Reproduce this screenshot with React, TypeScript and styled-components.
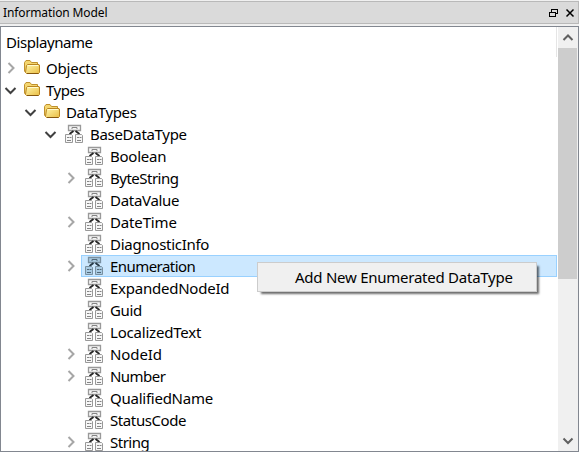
import React from 'react';
import styled, { createGlobalStyle } from 'styled-components';

const GlobalStyle = createGlobalStyle`
  * { box-sizing: border-box; }
  body { margin: 0; background: #f0f0f0; overflow: hidden; font-family: 'Noto Sans', 'Open Sans', sans-serif; }
`;

const Dock = styled.div`
  width: 579px;
  height: 452px;
  padding-top: 1px;
  display: flex;
  flex-direction: column;
  gap: 2px;
  background: #f0f0f0;
  color: #000;
`;

const TitleBar = styled.header`
  display: flex;
  align-items: center;
  height: 23px;
  width: 579px;
  padding: 0 3px 0 3px;
  border: 1px solid #b9b9b9;
  border-left-width: 0;
  background: #dadada;
`;

const Title = styled.span`
  flex: 1;
  font-size: 12px;
  line-height: 21px;
  letter-spacing: -0.12px;
`;

const TitleButtons = styled.div`
  display: flex;
  gap: 6px;
`;

const TreeFrame = styled.main`
  display: flex;
  width: 579px;
  height: 426px;
  border: 1px solid #828790;
  background: #fff;
`;

const Tree = styled.section`
  flex: 1;
  overflow: hidden;
`;

const HeaderRow = styled.div`
  display: flex;
  align-items: flex-start;
  height: 30px;
`;

const HeaderText = styled.span`
  flex: 1;
  padding: 4px 0 0 5px;
  font-size: 15px;
  line-height: 22px;
  letter-spacing: -0.43px;
`;

const HeaderDivider = styled.i`
  width: 1px;
  height: 30px;
  background: #e5e5e5;
  margin-right: 1px;
`;

const Row = styled.div<{ $depth: number }>`
  display: flex;
  height: 22px;
  padding-left: ${(p) => p.$depth * 20}px;
`;

const Branch = styled.div`
  width: 20px;
  flex: none;
  display: flex;
  align-items: center;
`;

const Item = styled.div<{ $selected?: boolean; $folder?: boolean }>`
  display: flex;
  align-items: center;
  flex: 1;
  height: 22px;
  margin-right: 1px;
  padding-left: ${(p) => (p.$folder ? 1 : 3)}px;
  border: 1px solid ${(p) => (p.$selected ? '#99d1ff' : 'transparent')};
  background: ${(p) => (p.$selected ? '#cce8ff' : 'transparent')};
`;

const Label = styled.span<{ $spacing: number; $folder?: boolean }>`
  margin-left: ${(p) => (p.$folder ? 5 : 7)}px;
  font-size: 15px;
  line-height: 22px;
  white-space: nowrap;
  letter-spacing: ${(p) => p.$spacing}px;
`;

const ScrollBar = styled.aside`
  display: flex;
  flex-direction: column;
  width: 20px;
  padding-right: 1px;
  background: #f0f0f0;
`;

const ScrollButton = styled.div`
  display: flex;
  align-items: center;
  justify-content: center;
  height: 21px;
`;

const ScrollTrack = styled.div`
  flex: 1;
`;

const ScrollThumb = styled.div`
  height: 231px;
  background: #cdcdcd;
`;

const ContextMenu = styled.div`
  position: absolute;
  left: 257px;
  top: 262px;
  width: 280px;
  height: 30px;
  padding-left: 37px;
  border: 1px solid #ccc;
  background: #f0f0f0;
  box-shadow: 3px 3px 2px -1px rgba(0, 0, 0, 0.58);
  font-size: 15px;
  line-height: 29px;
  letter-spacing: -0.25px;
  white-space: nowrap;
`;

const Svg = styled.svg`
  display: block;
  flex: none;
`;

const Chevron = ({ open }: { open: boolean }) => (
  <Svg width="20" height="20" fill="none" strokeWidth="2" stroke={open ? '#404040' : '#a6a6a6'}>
    <path d={open ? 'M4.5 8L9.5 13L14.5 8' : 'M7.5 5L12.5 10L7.5 15'} />
  </Svg>
);

const Folder = () => (
  <Svg width="18" height="18">
    <defs>
      <linearGradient id="folderFace" x1="0" y1="0" x2="1" y2="1">
        <stop offset="0" stopColor="#fff6ac" />
        <stop offset="1" stopColor="#e9bd43" />
      </linearGradient>
    </defs>
    <path d="M2.5 13.5L1.5 12V3.5L3 1.5H7L8.5 3.5H14.5V13" fill="#f4d66f" stroke="#c0912d" />
    <path d="M4.5 5.5H16L16.5 6V13.5L15.5 14.5H3.5L2.5 13.5L3.5 6.5Z" fill="url(#folderFace)" stroke="#b98420" />
    <path d="M5 6.5H15" stroke="#fffbd0" />
    <path d="M4 14.5H15.5" stroke="#85560e" />
  </Svg>
);

const DataTypeIcon = ({ selected }: { selected: boolean }) => {
  const frame = selected ? '#7990a1' : '#999';
  const fill = selected ? '#a9cbe3' : '#f7f7f7';
  const ink = selected ? '#526878' : '#858585';
  return (
    <Svg width="18" height="20" fill="none">
      <path d="M3.5 1.5H15.5V6.5H3.5Z" fill={fill} stroke={frame} strokeWidth="1.3" />
      <path d="M7 5V3.5H12V5" stroke={ink} />
      <path d="M8.5 7L4.5 10M10.5 7L14.5 10" stroke={selected ? '#243744' : '#252525'} strokeWidth="1.8" />
      <path d="M.5 10.5H6.5L7.5 11.5V18.5H.5Z M10.5 10.5H16.5L17.5 11.5V18.5H10.5Z" fill={fill} stroke={frame} />
      <path d="M2 13.5H4M4.5 13.5H6.5M2 16.5H6M12 13.5H14M14.5 13.5H16.5M12 16.5H16" stroke={ink} />
    </Svg>
  );
};

interface Node {
  name: string;
  depth: number;
  state?: 'open' | 'closed';
  folder?: boolean;
  spacing: number;
}

const nodes: Node[] = [
  { name: 'Objects', depth: 0, state: 'closed', folder: true, spacing: -0.22 },
  { name: 'Types', depth: 0, state: 'open', folder: true, spacing: -0.45 },
  { name: 'DataTypes', depth: 1, state: 'open', folder: true, spacing: -0.36 },
  { name: 'BaseDataType', depth: 2, state: 'open', spacing: -0.3 },
  { name: 'Boolean', depth: 3, spacing: -0.25 },
  { name: 'ByteString', depth: 3, state: 'closed', spacing: -0.5 },
  { name: 'DataValue', depth: 3, spacing: -0.3 },
  { name: 'DateTime', depth: 3, state: 'closed', spacing: -0.15 },
  { name: 'DiagnosticInfo', depth: 3, spacing: -0.28 },
  { name: 'Enumeration', depth: 3, state: 'closed', spacing: -0.55 },
  { name: 'ExpandedNodeId', depth: 3, spacing: -0.24 },
  { name: 'Guid', depth: 3, spacing: -0.35 },
  { name: 'LocalizedText', depth: 3, spacing: -0.2 },
  { name: 'NodeId', depth: 3, state: 'closed', spacing: -0.1 },
  { name: 'Number', depth: 3, state: 'closed', spacing: -0.55 },
  { name: 'QualifiedName', depth: 3, spacing: -0.25 },
  { name: 'StatusCode', depth: 3, spacing: -0.4 },
  { name: 'String', depth: 3, state: 'closed', spacing: -0.5 },
];

export default function App() {
  return (
    <>
      <GlobalStyle />
      <Dock>
        <TitleBar>
          <Title>Information Model</Title>
          <TitleButtons>
            <Svg width="10" height="10" fill="none" stroke="#000" shapeRendering="crispEdges">
              <path d="M2.5 4V1.5H8.5V5.5H6M2 1H9M.5 4.5H6.5V8.5H.5ZM0 4H7" />
            </Svg>
            <Svg width="10" height="10" fill="none" stroke="#000" strokeWidth="1.5">
              <path d="M1.5 1.5L8.5 8.5M8.5 1.5L1.5 8.5" />
            </Svg>
          </TitleButtons>
        </TitleBar>
        <TreeFrame>
          <Tree>
            <HeaderRow>
              <HeaderText>Displayname</HeaderText>
              <HeaderDivider />
            </HeaderRow>
            {nodes.map((node) => {
              const selected = node.name === 'Enumeration';
              return (
                <Row key={node.name} $depth={node.depth}>
                  <Branch>{node.state && <Chevron open={node.state === 'open'} />}</Branch>
                  <Item $selected={selected} $folder={node.folder}>
                    {node.folder ? <Folder /> : <DataTypeIcon selected={selected} />}
                    <Label $spacing={node.spacing} $folder={node.folder}>{node.name}</Label>
                  </Item>
                </Row>
              );
            })}
          </Tree>
          <ScrollBar>
            <ScrollButton>
              <Svg width="12" height="12" fill="none" stroke="#606060" strokeWidth="2">
                <path d="M1.5 8L6 3.5L10.5 8" />
              </Svg>
            </ScrollButton>
            <ScrollTrack><ScrollThumb /></ScrollTrack>
            <ScrollButton>
              <Svg width="12" height="12" fill="none" stroke="#606060" strokeWidth="2">
                <path d="M1.5 3.5L6 8L10.5 3.5" />
              </Svg>
            </ScrollButton>
          </ScrollBar>
        </TreeFrame>
      </Dock>
      <ContextMenu>Add New Enumerated DataType</ContextMenu>
    </>
  );
}
